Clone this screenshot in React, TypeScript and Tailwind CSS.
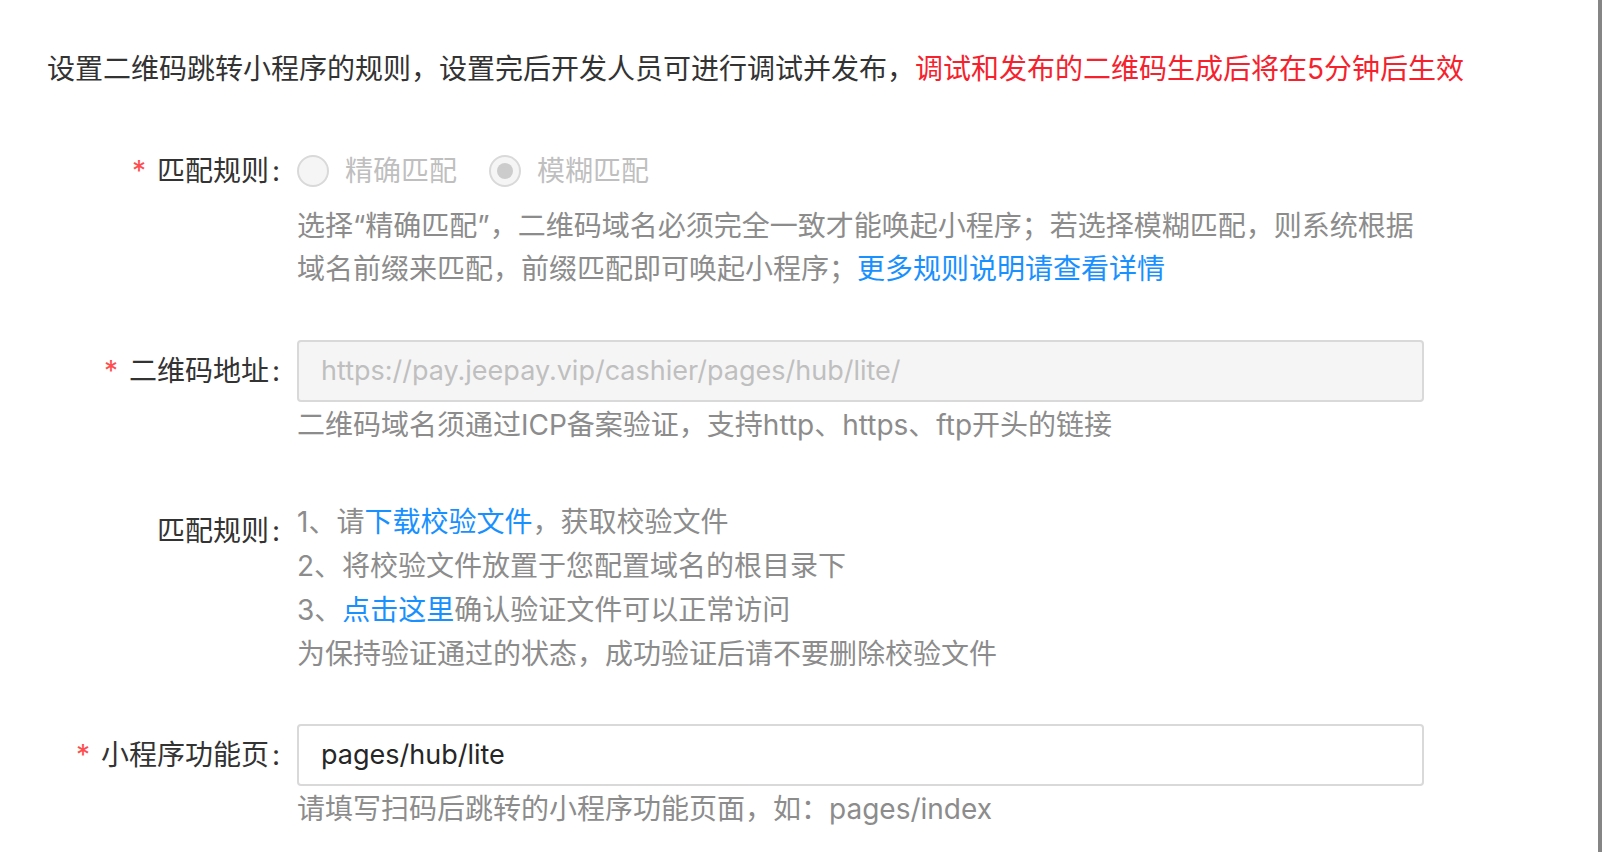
const font = "font-['Inter','Noto_Sans_CJK_SC',sans-serif]";

function Label({ text, required = true, className = "" }: { text: string; required?: boolean; className?: string }) {
  return (
    <div className={`flex w-[297px] shrink-0 items-center justify-end pr-[17px] text-[28px] leading-[44px] text-[#333333] ${className}`}>
      {required && <span className="mr-[11px] text-[#ff4d4f]">*</span>}
      <span>{text}</span>
      <span className="ml-[3px]">:</span>
    </div>
  );
}

function Radio({ label, checked = false }: { label: string; checked?: boolean }) {
  return (
    <label className="mr-[16px] flex items-center">
      <span className="flex h-[32px] w-[32px] items-center justify-center rounded-full border-2 border-[#d9d9d9] bg-[#f5f5f5]">
        {checked && <span className="h-[16px] w-[16px] rounded-full bg-[#cccccc]" />}
      </span>
      <span className="px-[16px] text-[#bfbfbf]">{label}</span>
    </label>
  );
}

export default function App() {
  return (
    <div className={`flex h-[852px] w-full overflow-hidden bg-white ${font}`}>
      <div className="flex-1">
        {/* Intro */}
        <p className="pl-[47px] pt-[47px] text-[28px] leading-[44px] text-[#333333]">
          设置二维码跳转小程序的规则，设置完后开发人员可进行调试并发布，
          <span className="text-[#f5222d]">调试和发布的二维码生成后将在5分钟后生效</span>
        </p>

        {/* 匹配规则 radios */}
        <div className="mt-[58px] flex">
          <Label text="匹配规则" className="h-[44px]" />
          <div className="w-[1127px] text-[28px]">
            <div className="flex h-[44px] items-center">
              <Radio label="精确匹配" />
              <Radio label="模糊匹配" checked />
            </div>
            <div className="mt-[12px] whitespace-nowrap leading-[43px] text-[#8c8c8c]">
              <div>选择“精确匹配”，二维码域名必须完全一致才能唤起小程序；若选择模糊匹配，则系统根据</div>
              <div>
                域名前缀来匹配，前缀匹配即可唤起小程序；
                <a className="text-[#1890ff]">更多规则说明请查看详情</a>
              </div>
            </div>
          </div>
        </div>

        {/* 二维码地址 */}
        <div className="mt-[49px] flex">
          <Label text="二维码地址" className="h-[62px]" />
          <div className="w-[1127px] text-[28px]">
            <div className="flex h-[62px] items-center rounded-[4px] border-2 border-[#d9d9d9] bg-[#f5f5f5] px-[22px] text-[27px] text-[#bfbfbf]">
              https://pay.jeepay.vip/cashier/pages/hub/lite/
            </div>
            <div className="mt-[2px] leading-[43px] text-[#8c8c8c]">
              二维码域名须通过ICP备案验证，支持http、https、ftp开头的链接
            </div>
          </div>
        </div>

        {/* 校验文件 */}
        <div className="mt-[53px] flex">
          <Label text="匹配规则" required={false} className="mt-[9px] h-[44px] self-start" />
          <div className="w-[1127px] text-[28px] leading-[44px] text-[#8c8c8c]">
            <div>
              1、请<a className="text-[#1890ff]">下载校验文件</a>，获取校验文件
            </div>
            <div>2、将校验文件放置于您配置域名的根目录下</div>
            <div>
              3、<a className="text-[#1890ff]">点击这里</a>确认验证文件可以正常访问
            </div>
            <div>为保持验证通过的状态，成功验证后请不要删除校验文件</div>
          </div>
        </div>

        {/* 小程序功能页 */}
        <div className="mt-[48px] flex">
          <Label text="小程序功能页" className="h-[62px]" />
          <div className="w-[1127px] text-[28px]">
            <div className="flex h-[62px] items-center rounded-[4px] border-2 border-[#d9d9d9] bg-white px-[22px] text-[27px] text-[#262626]">
              pages/hub/lite
            </div>
            <div className="mt-[2px] leading-[43px] text-[#8c8c8c]">
              请填写扫码后跳转的小程序功能页面，如：pages/index
            </div>
          </div>
        </div>
      </div>

      {/* scrollbar strip */}
      <div className="w-[4px] shrink-0 bg-[#858585]" />
    </div>
  );
}
